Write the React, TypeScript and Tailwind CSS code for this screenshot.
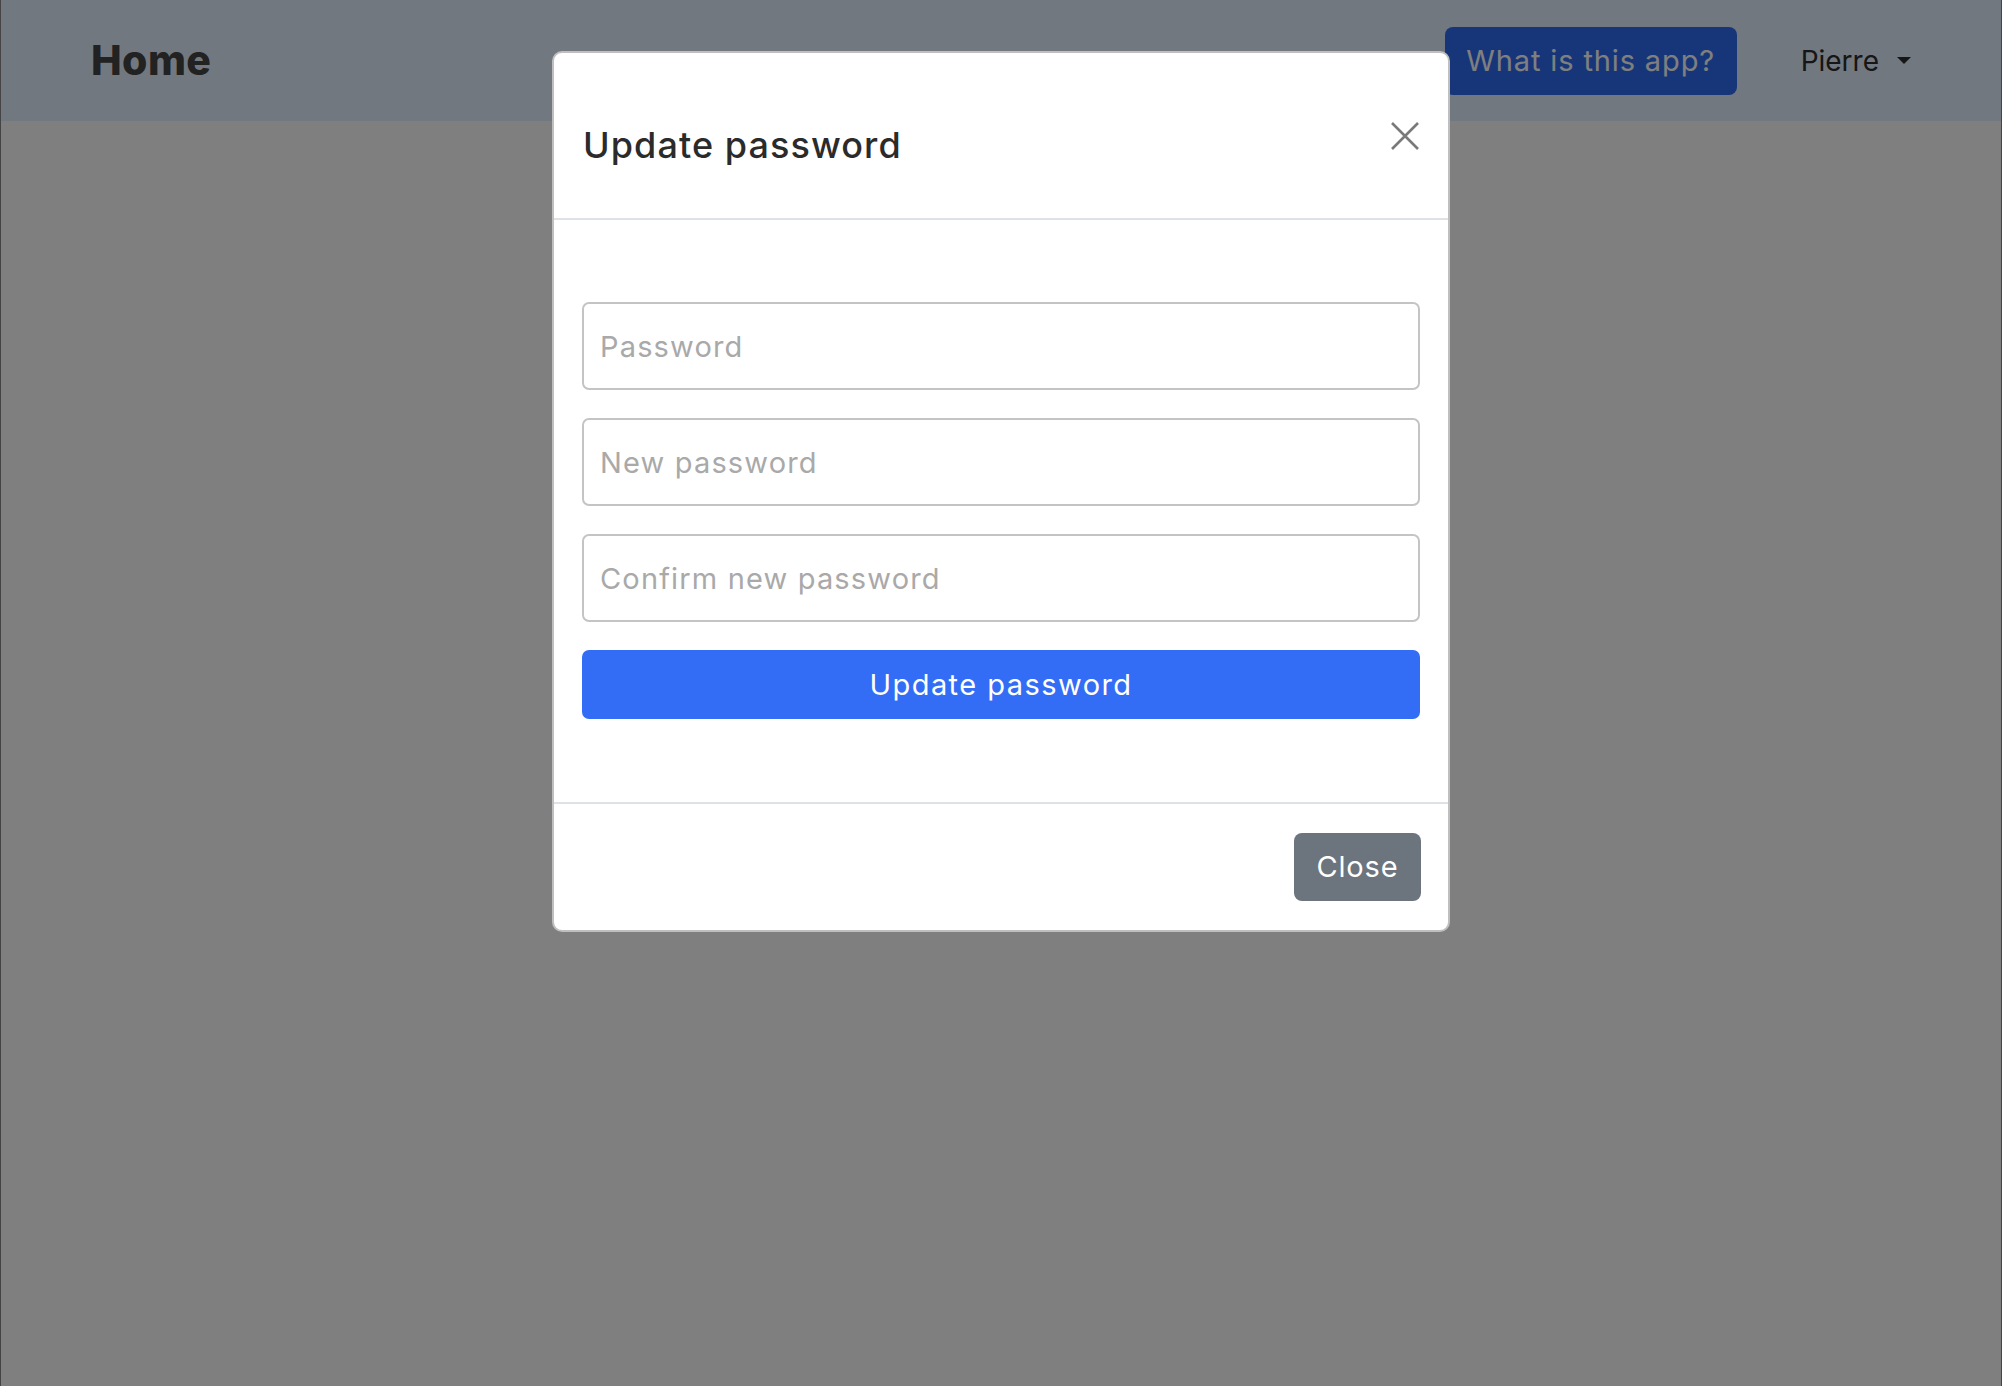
import React from "react";

const font = { fontFamily: '"Inter", "Open Sans", sans-serif' };

function Navbar() {
  return (
    <nav className="flex h-[121px] items-center justify-between bg-[#e4f0ff] px-[90px]">
      <span className="text-[41px] font-extrabold tracking-[0.01em] text-[#444]">Home</span>
      <div className="flex items-center gap-[64px]">
        <button className="h-[68px] w-[292px] rounded-[8px] bg-[#2e6cf2] text-[29px] tracking-[0.03em] text-white">
          What is this app?
        </button>
        <div className="flex items-center gap-[18px] text-[28px] text-[#2c2c2c]">
          <span>Pierre</span>
          <span className="h-0 w-0 border-x-[7px] border-t-[7px] border-x-transparent border-t-[#2c2c2c]" />
        </div>
      </div>
    </nav>
  );
}

function UpdatePasswordModal() {
  const fields = ["Password", "New password", "Confirm new password"];
  return (
    <div className="absolute inset-0 z-10 flex justify-center bg-black/50 pt-[51px]">
      <div className="h-fit w-[898px] rounded-[10px] border-2 border-black/25 bg-white">
        {/* Header */}
        <div className="flex h-[167px] items-center justify-between border-b-2 border-[#dee2e6] pl-[29px] pr-[27px]">
          <h5 className="mt-[18px] text-[36px] font-medium tracking-[0.03em] text-[#2b2b2b]">Update password</h5>
          <button className="flex h-[32px] w-[32px] items-center justify-center">
            <svg width="30" height="30" viewBox="0 0 30 30" fill="none" stroke="#7a7a7a" strokeWidth="2.6">
              <path d="M2 2 L28 28 M28 2 L2 28" />
            </svg>
          </button>
        </div>

        {/* Body */}
        <div className="flex flex-col gap-[28px] px-[28px] pb-[83px] pt-[82px]">
          {fields.map((f) => (
            <input
              key={f}
              type="password"
              placeholder={f}
              className="h-[88px] w-full rounded-[7px] border-2 border-[#c4c4c4] px-[16px] text-[29px] tracking-[0.04em] outline-none placeholder:text-[#a9a9a9]"
            />
          ))}
          <button className="h-[69px] w-full rounded-[7px] bg-[#336df5] text-[29px] tracking-[0.05em] text-white">
            Update password
          </button>
        </div>

        {/* Footer */}
        <div className="flex justify-end border-t-2 border-[#dee2e6] px-[27px] pb-[29px] pt-[29px]">
          <button className="h-[68px] w-[127px] rounded-[8px] bg-[#6c757d] text-[29px] tracking-[0.03em] text-white">
            Close
          </button>
        </div>
      </div>
    </div>
  );
}

export default function App() {
  return (
    <div className="relative flex min-h-screen flex-col border-x border-[#444] bg-white" style={font}>
      <Navbar />
      <div className="flex-1" />
      <UpdatePasswordModal />
    </div>
  );
}
